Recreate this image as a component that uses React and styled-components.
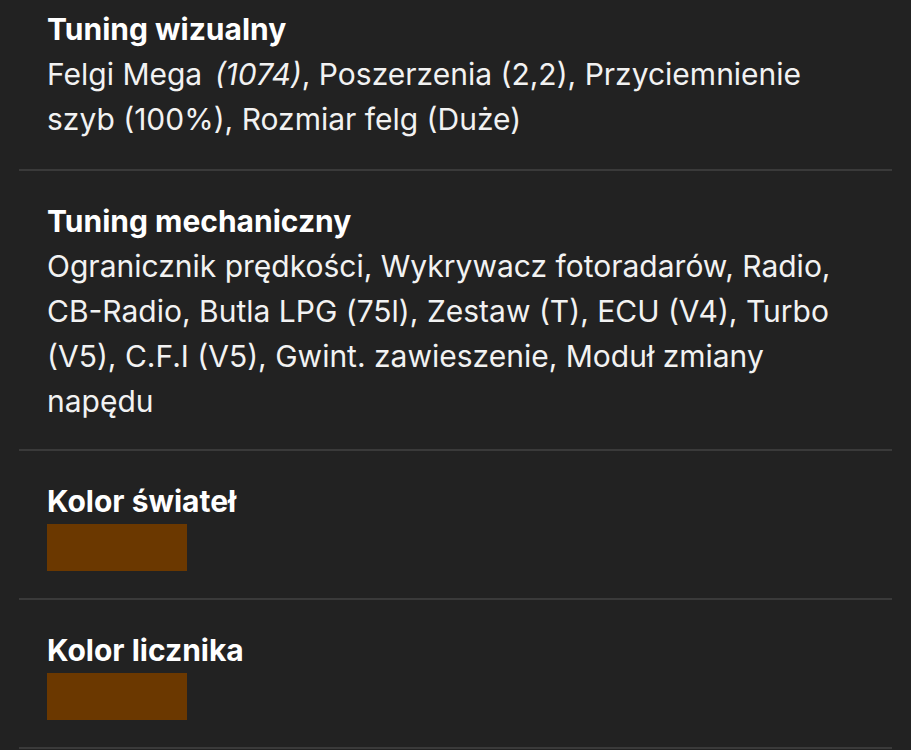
import React from 'react';
import styled, { createGlobalStyle } from 'styled-components';

const GlobalStyle = createGlobalStyle`
  html, body {
    margin: 0;
    padding: 0;
    background: #222222;
  }
  body {
    font-family: Inter, "Noto Sans", sans-serif;
    -webkit-font-smoothing: antialiased;
  }
`;

const Page = styled.div`
  background: #222222;
  min-height: 750px;
  padding: 0 19px;
  overflow: hidden;
`;

const List = styled.div`
  display: flex;
  flex-direction: column;
`;

// first block is cut by the scroll, the long text block ends a bit tighter
const Section = styled.section`
  padding-top: ${props => (props.$first ? '7px' : '28px')};
  padding-bottom: ${props => (props.$tight ? '25px' : '27px')};
  padding-left: 28px;
  padding-right: 28px;
  border-bottom: 2px solid #3a3a3a;
`;

const Title = styled.h3`
  margin: 0;
  font-size: 30px;
  line-height: 45px;
  font-weight: 700;
  color: #ffffff;
`;

const Body = styled.p`
  margin: 0;
  font-size: 30px;
  line-height: 45px;
  font-weight: 400;
  color: #f2f2f2;

  em {
    font-style: italic;
    margin-left: 4px;
  }
`;

const NoWrap = styled.span`
  white-space: nowrap;
`;

const Swatch = styled.div`
  width: 140px;
  height: 47px;
  background: ${props => props.$color};
`;

const App = () => {
  return (
    <>
      <GlobalStyle />
      <Page>
        <List>
          <Section $first>
            <Title>Tuning wizualny</Title>
            <Body>
              Felgi Mega <em>(1074)</em>, Poszerzenia (2,2), Przyciemnienie szyb (100%), Rozmiar felg (Duże)
            </Body>
          </Section>
          <Section $tight>
            <Title>Tuning mechaniczny</Title>
            <Body>
              Ogranicznik prędkości, Wykrywacz fotoradarów, Radio, <NoWrap>CB-Radio</NoWrap>, Butla LPG (75l), Zestaw (T), ECU (V4), Turbo (V5), C.F.I (V5), Gwint. zawieszenie, Moduł zmiany napędu
            </Body>
          </Section>
          <Section>
            <Title>Kolor świateł</Title>
            <Swatch $color="#6b3800" />
          </Section>
          <Section>
            <Title>Kolor licznika</Title>
            <Swatch $color="#6b3800" />
          </Section>
        </List>
      </Page>
    </>
  );
};

export default App;
